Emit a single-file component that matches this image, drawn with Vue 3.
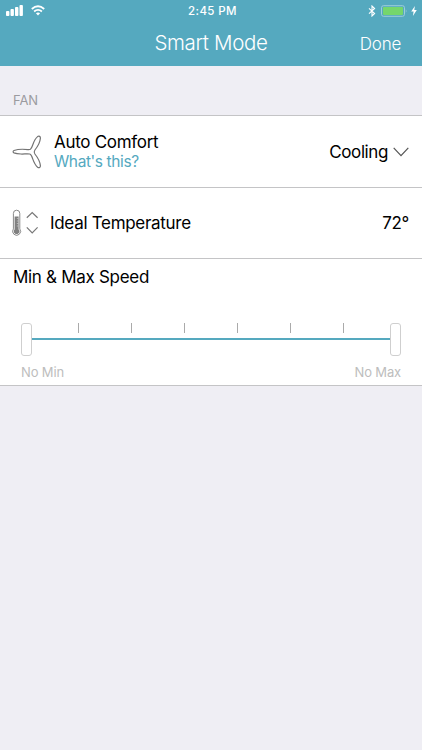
<template>
  <div class="screen">
    <header class="header">
      <div class="status-bar">
        <div class="status-left">
          <svg class="signal" width="17" height="11" viewBox="0 0 17 11">
            <rect
              v-for="(bar, index) in signalBars"
              :key="index"
              :x="index * 4.5"
              :y="11 - bar"
              width="3.4"
              :height="bar"
              rx="0.9"
            />
          </svg>
          <svg class="wifi" width="14" height="11" viewBox="0 0 14 11">
            <path d="M0.8 4 Q7 -1.5 13.2 4" />
            <path d="M3.1 6.5 Q7 3.2 10.9 6.5" />
            <path class="wifi-dot" d="M4.9 8.2 Q7 6.8 9.1 8.2 L7 10.5 Z" />
          </svg>
        </div>
        <span class="time">2:45 PM</span>
        <div class="status-right">
          <svg class="bluetooth" width="8" height="12" viewBox="0 0 8 12">
            <path d="M1 3.3 L6.6 8.5 L4 11 V1 L6.6 3.5 L1 8.7" />
          </svg>
          <svg class="battery" width="27" height="12" viewBox="0 0 27 12">
            <rect class="battery-case" x="0.5" y="0.7" width="23" height="10.6" rx="2" />
            <rect class="battery-level" x="2" y="2.1" width="20" height="7.8" rx="0.8" />
            <path class="battery-cap" d="M24.8 4.2 Q26.4 6 24.8 7.8 Z" />
          </svg>
          <svg class="bolt" width="6" height="10" viewBox="0 0 6 10">
            <path d="M3.9 0 L0.2 5.6 H2.6 L1.9 10 L5.8 4.1 H3.3 Z" />
          </svg>
        </div>
      </div>
      <nav class="nav-bar">
        <h1 class="title">Smart Mode</h1>
        <button class="done">Done</button>
      </nav>
    </header>

    <h2 class="section-title">FAN</h2>

    <main class="list">
      <section class="row">
        <svg class="fan" width="31" height="34" viewBox="0 0 31 34">
          <path
            d="M18.4 14.3 C19.6 13.4 20 12 20.8 9.7 C22 6.2 23.4 3.4 25.6 1.6 C27 0.6 28.6 1.4 28.4 3.2 C28 7.4 25.6 11.6 22.9 15 C22 16.3 22 17.7 22.9 19 C25.6 22.4 28 26.6 28.4 30.6 C28.6 32.4 27 33.2 25.6 32.2 C23.3 30.3 21.8 26.9 20.6 23.6 C19.8 21 19.4 19.5 17.8 19 C14.6 18.4 12.4 19.2 9 19 C6 18.9 3.9 18.6 2 17.9 C0.8 17.4 0.8 16 2 15.5 C6.5 13.9 11.8 14.1 15.8 14.6 C16.9 14.7 17.7 14.7 18.4 14.3 Z"
          />
        </svg>
        <div class="comfort">
          <span class="label">Auto Comfort</span>
          <a class="help">What's this?</a>
        </div>
        <span class="value mode">Cooling</span>
        <svg class="chevron" width="16" height="10" viewBox="0 0 16 10">
          <path d="M0.7 0.8 L8 8.6 L15.3 0.8" />
        </svg>
      </section>

      <section class="row">
        <svg class="thermometer" width="27" height="28" viewBox="0 0 27 28">
          <path class="tube" d="M1.4 19.9 V4.4 A3.2 3.2 0 0 1 7.8 4.4 V19.9 A4 4 0 1 1 1.4 19.9 Z" />
          <path class="mercury" d="M2.6 7.4 H6.6 V20.4 A2.8 2.8 0 1 1 2.6 20.4 Z" />
          <path class="scale" d="M4.8 9.5 H6.6 M4.8 12 H6.6 M4.8 14.5 H6.6 M4.8 17 H6.6" />
          <path class="arrow" d="M14.8 8.8 L20.2 3.6 L25.6 8.8" />
          <path class="arrow" d="M14.8 18.4 L20.2 23.8 L25.6 18.4" />
        </svg>
        <span class="label ideal">Ideal Temperature</span>
        <span class="value degrees">72°</span>
      </section>

      <section class="speed">
        <span class="label speed-label">Min &amp; Max Speed</span>
        <div class="slider">
          <span class="handle"></span>
          <div class="track">
            <div class="ticks">
              <i v-for="tick in 6" :key="tick" class="tick"></i>
            </div>
            <div class="line"></div>
          </div>
          <span class="handle"></span>
        </div>
        <div class="limits">
          <span class="no-min">No Min</span>
          <span class="no-max">No Max</span>
        </div>
      </section>
    </main>
  </div>
</template>

<script setup>
const signalBars = [5, 7, 9, 11]
</script>

<style>
body {
  background: #efeef4;
}
</style>

<style scoped>
.screen {
  width: 422px;
  height: 750px;
  overflow: hidden;
  background: #efeef4;
  font-family: Inter, 'Liberation Sans', sans-serif;
  color: #000;
}

svg {
  display: block;
  flex: none;
  fill: none;
}

.header {
  height: 66px;
  background: #55a9bf;
  color: #fff;
}

.status-bar {
  display: grid;
  grid-template-columns: 1fr auto 1fr;
  align-items: center;
  height: 21px;
  padding: 0 5px 0 6px;
}

.status-left,
.status-right {
  display: flex;
  align-items: center;
}

.status-left {
  gap: 8px;
}

.status-right {
  justify-content: flex-end;
}

.signal,
.bolt,
.wifi-dot {
  fill: #fff;
}

.wifi {
  stroke: #fff;
  stroke-width: 1.8;
}

.wifi-dot {
  stroke: none;
}

.time {
  margin-left: 2px;
  font-size: 11.5px;
  font-weight: 500;
  letter-spacing: 0.4px;
}

.bluetooth {
  margin-right: 5px;
  stroke: #fff;
  stroke-width: 1.1;
}

.battery {
  margin-right: 3px;
}

.battery-case {
  stroke: #9dcdd9;
}

.battery-level {
  fill: #75d66c;
}

.battery-cap {
  fill: #9dcdd9;
}

.nav-bar {
  display: grid;
  grid-template-columns: 1fr auto 1fr;
  align-items: center;
  height: 45px;
  padding-right: 21px;
}

.title {
  grid-column: 2;
  margin: 0 0 1px 21px;
  font-size: 20.5px;
  font-weight: 300;
  letter-spacing: -0.35px;
  line-height: 24px;
}

.done {
  justify-self: end;
  padding: 0;
  border: 0;
  background: none;
  color: inherit;
  font-family: inherit;
  font-size: 17px;
  font-weight: 300;
  letter-spacing: -0.25px;
  line-height: 20px;
}

.section-title {
  box-sizing: border-box;
  height: 49px;
  margin: 0;
  padding: 26px 13px 0;
  color: #9b9b9f;
  font-size: 13px;
  font-weight: 400;
  letter-spacing: -0.1px;
  line-height: 16px;
}

.list {
  border-top: 1px solid #c4c4c6;
  background: #fff;
}

.row {
  display: flex;
  align-items: center;
  box-sizing: border-box;
  height: 72px;
  padding: 0 13px 0 12px;
  border-bottom: 1px solid #c4c4c6;
}

.row + .row {
  height: 71px;
}

.fan {
  stroke: #737373;
  stroke-width: 1.2;
}

.comfort {
  display: flex;
  flex-direction: column;
  margin-left: 11px;
}

.label,
.value {
  font-size: 17px;
  letter-spacing: -0.3px;
  line-height: 20px;
}

.help {
  color: #55a9bf;
  font-size: 15.5px;
  letter-spacing: -0.4px;
  line-height: 19px;
}

.value {
  margin-left: auto;
}

.mode {
  letter-spacing: -0.4px;
}

.chevron {
  margin-left: 5px;
  stroke: #555;
  stroke-width: 1.2;
}

.tube {
  fill: #fff;
  stroke: #8a8a8a;
}

.mercury {
  fill: #808080;
}

.scale {
  stroke: #c4c4c4;
  stroke-width: 0.8;
}

.arrow {
  stroke: #777;
  stroke-width: 1.2;
}

.ideal {
  margin-left: 11px;
}

.speed {
  display: flex;
  flex-direction: column;
  box-sizing: border-box;
  height: 127px;
  padding: 8px 21px 0;
  border-bottom: 1px solid #c4c4c6;
}

.speed-label {
  margin-left: -8px;
}

.slider {
  display: flex;
  height: 33px;
  margin-top: 36px;
}

.handle {
  box-sizing: border-box;
  flex: none;
  width: 11px;
  border: 1px solid #cfcfcf;
  border-radius: 3px;
  background: #fff;
}

.track {
  flex: 1;
}

.ticks {
  display: flex;
  justify-content: space-between;
  height: 15px;
  padding: 0 46px;
}

.tick {
  width: 1px;
  height: 10px;
  background: #aaa;
}

.line {
  height: 2px;
  background: #55a9bf;
}

.limits {
  display: flex;
  justify-content: space-between;
  margin-top: 8px;
  color: #bdbdbd;
  font-size: 13px;
  letter-spacing: -0.15px;
  line-height: 16px;
}
</style>
